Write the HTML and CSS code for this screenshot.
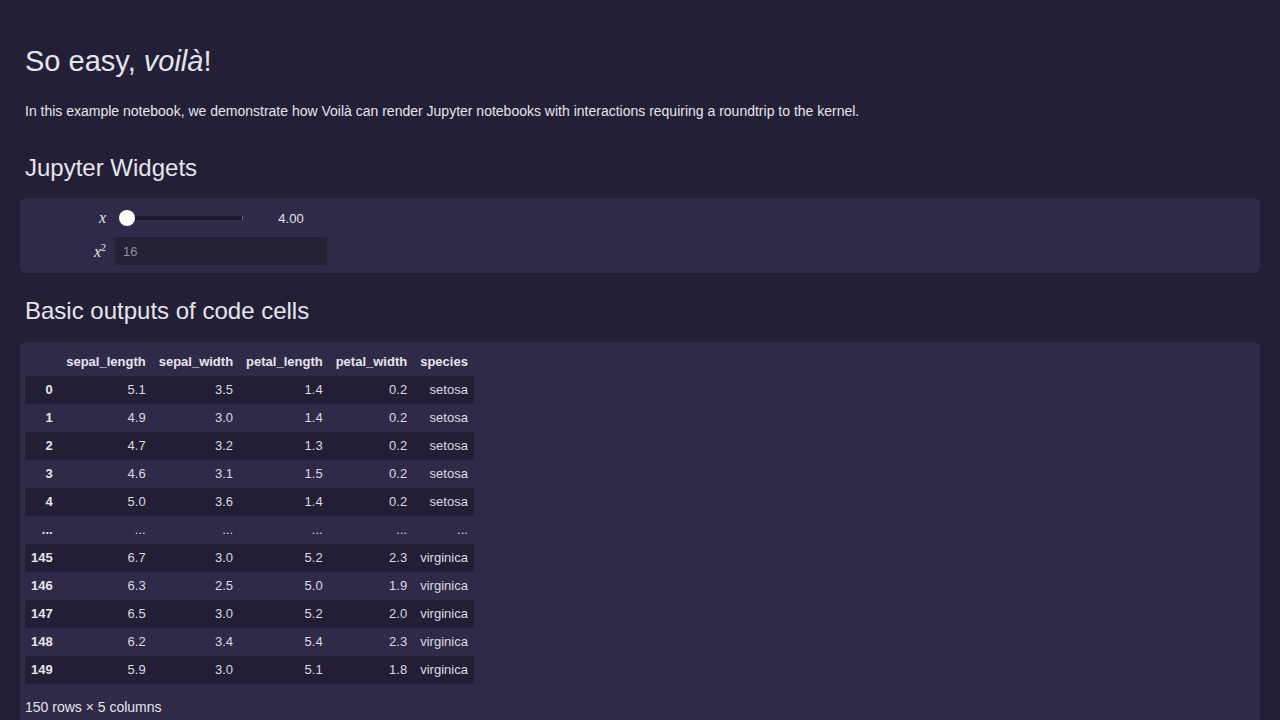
FILE: index.html
```html
<!DOCTYPE html>
<html lang="en">
<head>
<meta charset="utf-8">
<title>Voilà example</title>
<link rel="stylesheet" href="styles.css">
</head>
<body>
<main class="notebook">
  <section class="md-cell">
    <h1 class="title">So easy, <em>voilà</em>!</h1>
    <p class="intro">In this example notebook, we demonstrate how Voilà can render Jupyter notebooks with interactions requiring a roundtrip to the kernel.</p>
    <h2 class="section-title first">Jupyter Widgets</h2>
  </section>

  <section class="output-card widgets">
    <div class="widget-row">
      <label class="widget-label"><span class="math">x</span></label>
      <div class="slider">
        <div class="slider-track"><span class="slider-thumb"></span><span class="slider-tick"></span></div>
      </div>
      <div class="readout">4.00</div>
    </div>
    <div class="widget-row">
      <label class="widget-label"><span class="math">x<sup>2</sup></span></label>
      <input class="text-input" type="text" value="16" disabled>
    </div>
  </section>

  <section class="md-cell">
    <h2 class="section-title">Basic outputs of code cells</h2>
  </section>

  <section class="output-card table-card">
    <table class="dataframe">
      <thead>
        <tr><th></th><th>sepal_length</th><th>sepal_width</th><th>petal_length</th><th>petal_width</th><th>species</th></tr>
      </thead>
      <tbody>
        <tr><th>0</th><td>5.1</td><td>3.5</td><td>1.4</td><td>0.2</td><td>setosa</td></tr>
        <tr><th>1</th><td>4.9</td><td>3.0</td><td>1.4</td><td>0.2</td><td>setosa</td></tr>
        <tr><th>2</th><td>4.7</td><td>3.2</td><td>1.3</td><td>0.2</td><td>setosa</td></tr>
        <tr><th>3</th><td>4.6</td><td>3.1</td><td>1.5</td><td>0.2</td><td>setosa</td></tr>
        <tr><th>4</th><td>5.0</td><td>3.6</td><td>1.4</td><td>0.2</td><td>setosa</td></tr>
        <tr><th>...</th><td>...</td><td>...</td><td>...</td><td>...</td><td>...</td></tr>
        <tr><th>145</th><td>6.7</td><td>3.0</td><td>5.2</td><td>2.3</td><td>virginica</td></tr>
        <tr><th>146</th><td>6.3</td><td>2.5</td><td>5.0</td><td>1.9</td><td>virginica</td></tr>
        <tr><th>147</th><td>6.5</td><td>3.0</td><td>5.2</td><td>2.0</td><td>virginica</td></tr>
        <tr><th>148</th><td>6.2</td><td>3.4</td><td>5.4</td><td>2.3</td><td>virginica</td></tr>
        <tr><th>149</th><td>5.9</td><td>3.0</td><td>5.1</td><td>1.8</td><td>virginica</td></tr>
      </tbody>
    </table>
    <p class="shape">150 rows × 5 columns</p>
  </section>
</main>
</body>
</html>
```

FILE: styles.css
```css
html, body {
  margin: 0;
  padding: 0;
  background: #221f36;
}

body {
  font-family: "Liberation Sans", Arial, sans-serif;
  color: #e6e5ec;
}

.notebook {
  padding: 0 20px 40px 20px;
}

.md-cell {
  padding: 0 5px;
}

.title {
  margin: 44px 0 0 0;
  font-size: 29px;
  line-height: 35px;
  font-weight: 400;
}

.title em {
  font-style: italic;
}

.intro {
  margin: 22px 0 0 0;
  font-size: 14px;
  line-height: 20px;
}

.section-title {
  margin: 23px 0 17px 0;
  font-size: 24px;
  line-height: 29px;
  font-weight: 400;
}

.section-title.first {
  margin-top: 32px;
  margin-bottom: 16px;
}

.output-card {
  background: #2e2a47;
  border-radius: 6px;
}

.widgets {
  padding: 6px 0 8px 6px;
  display: flex;
  flex-direction: column;
  gap: 5px;
}

.widget-row {
  display: flex;
  align-items: center;
  height: 28px;
}

.widget-label {
  width: 80px;
  margin-right: 9px;
  text-align: right;
}

.math {
  font-family: "Liberation Serif", "DejaVu Serif", serif;
  font-style: italic;
  font-size: 16px;
  color: #ecebf2;
}

.math sup {
  font-style: normal;
  font-size: 10px;
}

.slider {
  width: 140px;
  height: 28px;
  display: flex;
  align-items: center;
}

.slider-track {
  position: relative;
  margin-left: 12px;
  width: 116px;
  height: 4px;
  background: #1d1a2e;
}

.slider-thumb {
  position: absolute;
  left: -8px;
  top: -6px;
  width: 16px;
  height: 16px;
  border-radius: 50%;
  background: #ffffff;
}

.slider-tick {
  position: absolute;
  right: 0;
  top: 0;
  width: 1px;
  height: 4px;
  background: #6c6884;
}

.readout {
  width: 72px;
  text-align: center;
  font-size: 13px;
  color: #e6e5ec;
}

.text-input {
  width: 212px;
  height: 28px;
  box-sizing: border-box;
  border: none;
  background: #252137;
  color: #8f8ca0;
  font-family: "Liberation Sans", Arial, sans-serif;
  font-size: 13px;
  padding: 0 8px;
  outline: none;
  margin: 0;
}

.table-card {
  padding: 6px 5px 20px 5px;
}

.dataframe {
  border-collapse: collapse;
  border: none;
  font-size: 13px;
  line-height: 16px;
  color: #dcdbe3;
}

.dataframe th,
.dataframe td {
  padding: 6px 6.5px;
  text-align: right;
  white-space: nowrap;
}

.dataframe thead th {
  font-weight: 700;
  color: #e6e5ec;
}

.dataframe tbody th {
  font-weight: 700;
  color: #e6e5ec;
  padding-left: 6px;
  padding-right: 7px;
}

.dataframe tbody tr:nth-child(odd) {
  background: #221e35;
}

.shape {
  margin: 13px 0 0 0;
  font-size: 14px;
  line-height: 20px;
  color: #e6e5ec;
}
```
